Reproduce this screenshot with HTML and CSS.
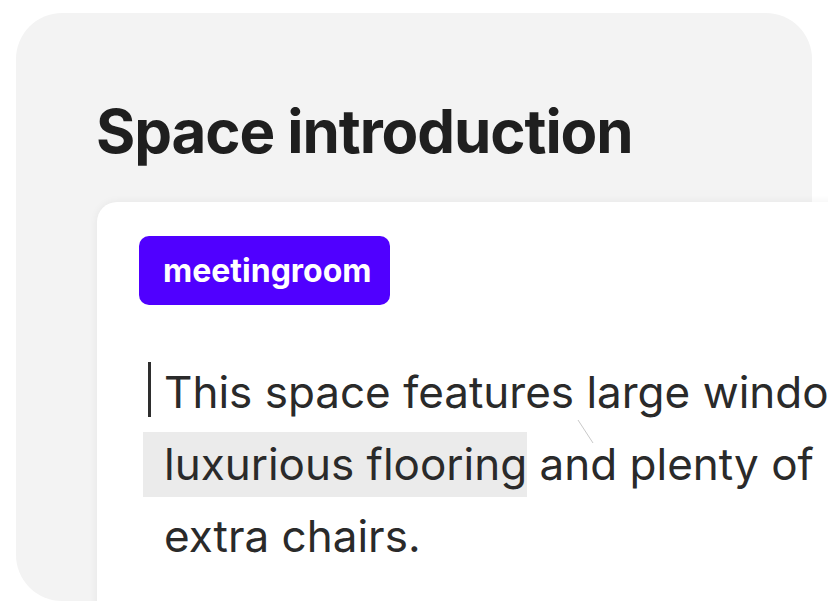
FILE: index.html
```html
<!DOCTYPE html>
<html lang="en">
<head>
    <meta charset="UTF-8">
    <meta name="viewport" content="width=device-width, initial-scale=1.0">
    <title>Space introduction</title>
    <link rel="stylesheet" href="styles.css">
</head>
<body>
    <div class="panel">
        <h1 class="title">Space introduction</h1>
        <div class="sheet">
            <span class="tag">meetingroom</span>
            <p class="intro">
                <span class="caret"></span>
                <svg class="pointer" width="18" height="26" viewBox="0 0 18 26">
                    <line x1="1" y1="1" x2="16" y2="24" stroke="#c9c9c9" stroke-width="1"/>
                </svg>
                This space features large windows,<br>
                <span class="mark">luxurious flooring</span> and plenty of<br>
                extra chairs.
            </p>
        </div>
    </div>
</body>
</html>
```

FILE: styles.css
```css
body {
    margin: 0;
    background: #fff;
    overflow: hidden;
    font-family: Inter, "Noto Sans", sans-serif;
}
.panel {
    box-sizing: border-box;
    width: 796px;
    height: 588px;
    margin: 13px 0 0 16px;
    padding: 86px 0 0 80px;
    background: #f3f3f3;
    border-radius: 46px;
}
.title {
    margin: 0;
    font-size: 60px;
    line-height: 64px;
    font-weight: 700;
    letter-spacing: -0.018em;
    color: #1f1f1f;
}
.sheet {
    box-sizing: border-box;
    width: 800px;
    height: 450px;
    margin: 39px 0 0 1px;
    padding: 34px 0 0 42px;
    background: #fff;
    border-radius: 20px 0 0 0;
    box-shadow: 0 0 8px rgba(0, 0, 0, 0.06);
}
.tag {
    display: inline-block;
    height: 69px;
    padding: 0 18px 0 24px;
    line-height: 69px;
    font-size: 32px;
    font-weight: 700;
    color: #fff;
    background: #5000ff;
    border-radius: 10px;
}
.intro {
    position: relative;
    margin: 51px 0 0 25px;
    font-size: 44px;
    line-height: 72px;
    color: #2a2a2a;
    white-space: nowrap;
}
.caret {
    position: absolute;
    left: -16px;
    top: 6px;
    width: 3px;
    height: 55px;
    background: #2e2e2e;
}
.pointer {
    position: absolute;
    left: 413px;
    top: 63px;
}
.mark {
    margin-left: -21px;
    padding: 5px 0 6px 21px;
    background: #ebebeb;
}
```
